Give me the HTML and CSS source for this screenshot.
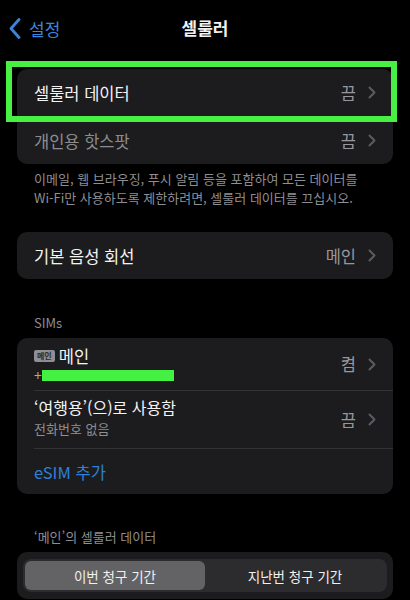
FILE: index.html
```html
<!DOCTYPE html>
<html lang="ko">
<head>
<meta charset="utf-8">
<link rel="stylesheet" href="styles.css">
</head>
<body>
<div class="screen">
  <header class="nav">
    <div class="back">
      <svg class="back-icon" width="12" height="21" viewBox="0 0 12 21"><path d="M10 1.5 L2 10.5 L10 19.5" fill="none" stroke="#3a86dc" stroke-width="2.8" stroke-linecap="round" stroke-linejoin="round"/></svg>
      <span>설정</span>
    </div>
    <div class="title">셀룰러</div>
  </header>

  <section class="group first">
    <div class="card">
      <div class="row">
        <span class="label">셀룰러 데이터</span>
        <span class="value">끔</span>
        <svg class="chev" width="8" height="13" viewBox="0 0 8 13"><path d="M1.5 1.5 L6.5 6.5 L1.5 11.5" fill="none" stroke="#5c5c60" stroke-width="2" stroke-linecap="round" stroke-linejoin="round"/></svg>
      </div>
      <div class="sep"></div>
      <div class="row">
        <span class="label dim">개인용 핫스팟</span>
        <span class="value">끔</span>
        <svg class="chev" width="8" height="13" viewBox="0 0 8 13"><path d="M1.5 1.5 L6.5 6.5 L1.5 11.5" fill="none" stroke="#5c5c60" stroke-width="2" stroke-linecap="round" stroke-linejoin="round"/></svg>
      </div>
    </div>
    <div class="highlight"></div>
    <p class="footer">이메일, 웹 브라우징, 푸시 알림 등을 포함하여 모든 데이터를<br>Wi-Fi만 사용하도록 제한하려면, 셀룰러 데이터를 끄십시오.</p>
  </section>

  <section class="group voice">
    <div class="card">
      <div class="row">
        <span class="label">기본 음성 회선</span>
        <span class="value">메인</span>
        <svg class="chev" width="8" height="13" viewBox="0 0 8 13"><path d="M1.5 1.5 L6.5 6.5 L1.5 11.5" fill="none" stroke="#5c5c60" stroke-width="2" stroke-linecap="round" stroke-linejoin="round"/></svg>
      </div>
    </div>
  </section>

  <section class="group sims">
    <div class="header">SIMs</div>
    <div class="card">
      <div class="row sim-main">
        <div class="stack">
          <div class="sim-name"><span class="badge">메인</span><span class="label">메인</span></div>
          <div class="phone"><span class="plus">+</span><span class="redact"></span></div>
        </div>
        <span class="value">켬</span>
        <svg class="chev" width="8" height="13" viewBox="0 0 8 13"><path d="M1.5 1.5 L6.5 6.5 L1.5 11.5" fill="none" stroke="#5c5c60" stroke-width="2" stroke-linecap="round" stroke-linejoin="round"/></svg>
      </div>
      <div class="sep"></div>
      <div class="row sim-travel">
        <div class="stack">
          <span class="label">‘여행용’(으)로 사용함</span>
          <span class="sub">전화번호 없음</span>
        </div>
        <span class="value">끔</span>
        <svg class="chev" width="8" height="13" viewBox="0 0 8 13"><path d="M1.5 1.5 L6.5 6.5 L1.5 11.5" fill="none" stroke="#5c5c60" stroke-width="2" stroke-linecap="round" stroke-linejoin="round"/></svg>
      </div>
      <div class="sep"></div>
      <div class="row esim">
        <span class="link">eSIM 추가</span>
      </div>
    </div>
  </section>

  <section class="group usage">
    <div class="header">‘메인’의 셀룰러 데이터</div>
    <div class="card seg-card">
      <div class="segmented">
        <div class="seg active">이번 청구 기간</div>
        <div class="seg">지난번 청구 기간</div>
      </div>
    </div>
  </section>
</div>
</body>
</html>
```

FILE: styles.css
```css
* { box-sizing: border-box; }
html, body {
  margin: 0;
  padding: 0;
  background: #000;
}
body {
  font-family: "Noto Sans CJK KR", "Noto Sans", sans-serif;
  color: #fff;
  width: 410px;
  height: 600px;
  overflow: hidden;
}
.screen {
  display: flex;
  flex-direction: column;
}
.nav {
  position: relative;
  height: 54px;
  display: flex;
  align-items: center;
  justify-content: center;
}
.back {
  position: absolute;
  left: 9px;
  top: 16px;
  display: flex;
  align-items: center;
  gap: 8px;
  color: #3a86dc;
  font-size: 17px;
}
.back-icon { display: block; }
.title {
  font-size: 17px;
  font-weight: 600;
  color: #f2f2f2;
}
.group {
  position: relative;
  margin: 0 17px;
}
.group.first { margin-top: 15px; }
.group.voice { margin-top: 25px; }
.group.sims { margin-top: 35px; }
.group.usage { margin-top: 34px; }
.card {
  background: #1c1c1e;
  border-radius: 10px;
  overflow: hidden;
}
.row {
  display: flex;
  align-items: center;
  height: 47px;
  padding: 0 17px;
}
.label {
  font-size: 16.5px;
  color: #f4f4f4;
  flex: 1;
  white-space: nowrap;
}
.label.dim { color: #8c8c90; }
.value {
  font-size: 16.5px;
  color: #98989c;
  margin-right: 12px;
}
.chev { display: block; flex: none; }
.sep {
  height: 1px;
  background: #333336;
  margin-left: 17px;
}
.highlight {
  position: absolute;
  left: -11px;
  top: -8px;
  width: 391px;
  height: 61px;
  border: 6px solid #47f042;
}
.footer {
  margin: 5px 0 0;
  padding: 0 17px;
  font-size: 13px;
  line-height: 19px;
  color: #8e8e93;
  white-space: nowrap;
}
.header {
  padding: 0 17px;
  font-size: 13px;
  line-height: 18px;
  color: #8e8e93;
  margin-bottom: 6px;
}
.stack {
  flex: 1;
  display: flex;
  flex-direction: column;
}
.sim-main { height: 52px; }
.sim-travel { height: 57px; }
.esim { height: 45px; }
.sim-name {
  display: flex;
  align-items: center;
  gap: 4px;
  line-height: 20px;
}
.badge {
  background: #8e8e93;
  color: #2a2a2c;
  font-size: 8px;
  line-height: 12px;
  padding: 0 3px;
  border-radius: 2px;
  font-weight: 700;
}
.phone {
  display: flex;
  align-items: center;
  height: 14px;
  margin-top: 2px;
}
.plus {
  color: #aaa;
  font-size: 14px;
  line-height: 14px;
  width: 8px;
}
.redact {
  width: 132px;
  height: 11px;
  background: #44f042;
}
.sim-travel .stack { margin-top: -2px; }
.sim-travel .label {
  font-size: 16px;
  line-height: 21px;
}
.sub {
  font-size: 13px;
  line-height: 22px;
  color: #8e8e93;
}
.link {
  font-size: 16.5px;
  color: #2f80d8;
}
.seg-card { padding: 7px 6px; }
.segmented {
  display: grid;
  grid-template-columns: 1fr 1fr;
  background: #2c2c2e;
  border-radius: 8px;
  padding: 2px;
  height: 33px;
}
.seg {
  display: flex;
  align-items: center;
  justify-content: center;
  font-size: 13.5px;
  color: #f0f0f0;
  border-radius: 6px;
}
.seg.active { background: #636366; }
```
